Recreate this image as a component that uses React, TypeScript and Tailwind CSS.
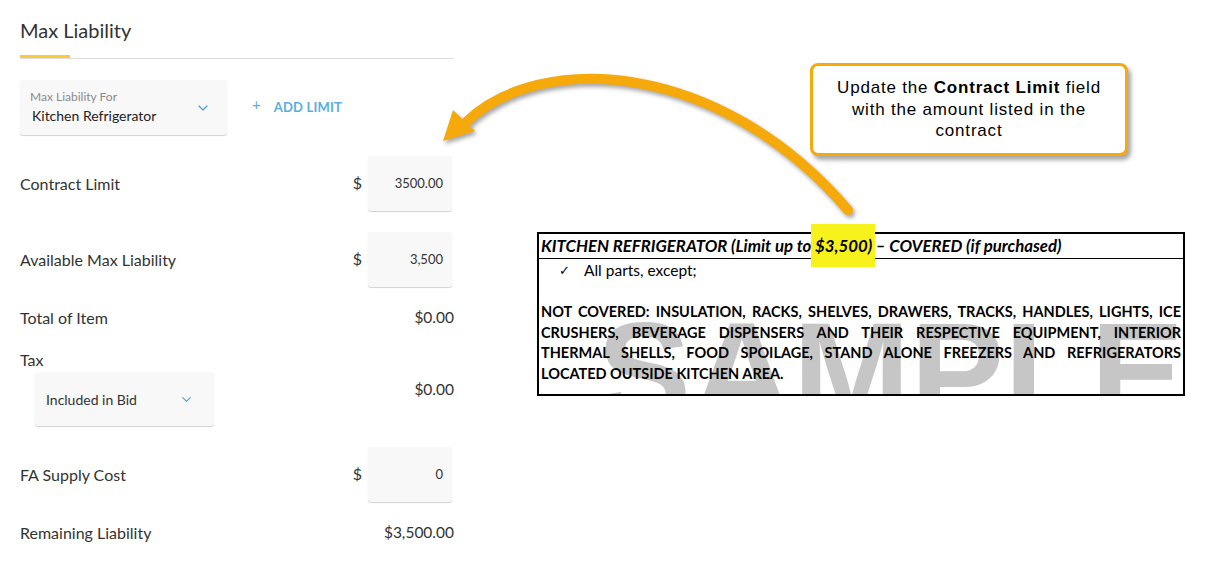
import { ChevronDown } from "lucide-react";

// Left form rows with a "$" input box on the right
function MoneyInput({ label, value }: { label: string; value: string }) {
    return (
        <div className="flex items-center justify-between h-[55px]">
            <span className="text-[16px] text-[#333]">{label}</span>
            <div className="flex items-center mr-[2px]">
                <span className="text-[16px] text-[#333] mr-[6px] -mt-[2px]">$</span>
                <div className="w-[84px] h-[55px] bg-[#f8f8f8] rounded-[3px] shadow-[0_1px_1px_rgba(0,0,0,0.18)] flex items-center justify-end pr-[9px] text-[13px] text-[#333]">
                    {value}
                </div>
            </div>
        </div>
    );
}

function TextRow({ label, value }: { label: string; value: string }) {
    return (
        <div className="flex items-center justify-between h-[20px]">
            <span className="text-[16px] text-[#333]">{label}</span>
            <span className="text-[15.5px] text-[#333]">{value}</span>
        </div>
    );
}

function Arrow() {
    return (
        <svg
            className="absolute left-0 top-0 pointer-events-none drop-shadow-[2px_3px_2px_rgba(0,0,0,0.35)]"
            width="1231"
            height="568"
            viewBox="0 0 1231 568"
        >
            <path d="M465 123 C 540 50, 720 60, 848 210" fill="none" stroke="#f6a90a" strokeWidth="10" strokeLinecap="round" />
            <polygon points="443,141 453,110 475,131" fill="#f6a90a" />
        </svg>
    );
}

const justifiedLine = "text-justify [text-align-last:justify] whitespace-nowrap";

export default function App() {
    return (
        <div className="relative w-[1231px] h-[568px] bg-white overflow-hidden flex font-['Lato',sans-serif]">
            {/* form */}
            <div className="w-[434px] ml-[20px] pt-[18px] flex flex-col">
                <h2 className="text-[20px] leading-[24px] text-[#333]">Max Liability</h2>
                <div className="mt-[13px] border-b border-[#ddd]">
                    <div className="w-[50px] h-[3px] bg-[#fcc93b]" />
                </div>

                <div className="mt-[21px] flex items-center">
                    <div className="w-[207px] h-[55px] bg-[#f8f8f8] rounded-[3px] shadow-[0_1px_1px_rgba(0,0,0,0.18)] flex items-center pl-[10px] pr-[16px]">
                        <div className="flex-1 flex flex-col">
                            <span className="text-[12px] leading-[14px] text-[#8a8a8a]">Max Liability For</span>
                            <span className="text-[14px] leading-[20px] text-[#222] ml-[2px] mt-[2px]">Kitchen Refrigerator</span>
                        </div>
                        <ChevronDown size={16} strokeWidth={1.8} className="text-[#4a9fd8]" />
                    </div>
                    <div className="ml-[25px] flex items-center text-[#5aade3] font-bold">
                        <span className="text-[15px] font-normal -mt-[6px]">+</span>
                        <span className="ml-[13px] text-[13px] tracking-[0.2px]">ADD LIMIT</span>
                    </div>
                </div>

                <div className="mt-[21px]">
                    <MoneyInput label="Contract Limit" value="3500.00" />
                </div>
                <div className="mt-[21px]">
                    <MoneyInput label="Available Max Liability" value="3,500" />
                </div>
                <div className="mt-[21px]">
                    <TextRow label="Total of Item" value="$0.00" />
                </div>
                <div className="mt-[22px] h-[20px] flex items-center text-[16px] text-[#333]">Tax</div>
                <div className="mt-[2px] flex justify-between">
                    <div className="ml-[15px] w-[179px] h-[54px] bg-[#f8f8f8] rounded-[3px] shadow-[0_1px_1px_rgba(0,0,0,0.18)] flex items-center justify-between pl-[11px] pr-[20px]">
                        <span className="text-[14px] text-[#333]">Included in Bid</span>
                        <ChevronDown size={15} strokeWidth={1.8} className="text-[#4a9fd8]" />
                    </div>
                    <span className="mt-[6px] text-[15.5px] text-[#333]">$0.00</span>
                </div>
                <div className="mt-[21px]">
                    <MoneyInput label="FA Supply Cost" value="0" />
                </div>
                <div className="mt-[21px]">
                    <TextRow label="Remaining Liability" value="$3,500.00" />
                </div>
            </div>

            {/* annotation side */}
            <div className="ml-[83px] flex flex-col">
                <div className="ml-[273px] mt-[63px] w-[318px] h-[93px] border-[3px] border-[#f6a90a] rounded-[8px] bg-white shadow-[3px_4px_4px_rgba(0,0,0,0.35)] flex items-center justify-center text-center font-['Liberation_Sans',Arial,sans-serif] text-[17px] tracking-[0.8px] leading-[21.5px] text-black">
                    <p>
                        Update the <b>Contract Limit</b> field
                        <br />
                        with the amount listed in the
                        <br />
                        contract
                    </p>
                </div>

                <div className="relative mt-[76px] w-[648px] h-[164px] border-2 border-black font-['Lato',sans-serif] text-black">
                    <div className="absolute inset-0 overflow-hidden">
                        <span className="absolute left-[58px] top-[68px] text-[141px] leading-[140px] font-bold text-[#c6c6c6] font-['Liberation_Sans',Arial,sans-serif]">
                            SAMPLE
                        </span>
                    </div>
                    <div className="relative">
                        <div className="h-[25px] border-b border-black flex items-center px-[2px] text-[16.8px] font-bold italic">
                            <span>
                                KITCHEN REFRIGERATOR (Limit up to{" "}
                                <span className="bg-[#f8f21c] py-[11px] pl-[4px] -ml-[4px] pr-[3px] -mr-[3px]">$3,500)</span> – COVERED (if purchased)
                            </span>
                        </div>
                        <div className="h-[18px] flex items-center text-[15.5px] mt-[3px]">
                            <span className="ml-[20px] w-[25px] text-[13px]">✓</span>
                            <span>All parts, except;</span>
                        </div>
                        <div className="mt-[22px] px-[2px] text-[14.5px] leading-[20.7px] font-bold">
                            <p className={justifiedLine}>NOT COVERED: INSULATION, RACKS, SHELVES, DRAWERS, TRACKS, HANDLES, LIGHTS, ICE</p>
                            <p className={justifiedLine}>CRUSHERS, BEVERAGE DISPENSERS AND THEIR RESPECTIVE EQUIPMENT, INTERIOR</p>
                            <p className={justifiedLine}>THERMAL SHELLS, FOOD SPOILAGE, STAND ALONE FREEZERS AND REFRIGERATORS</p>
                            <p>LOCATED OUTSIDE KITCHEN AREA.</p>
                        </div>
                    </div>
                </div>
            </div>

            <Arrow />
        </div>
    );
}
